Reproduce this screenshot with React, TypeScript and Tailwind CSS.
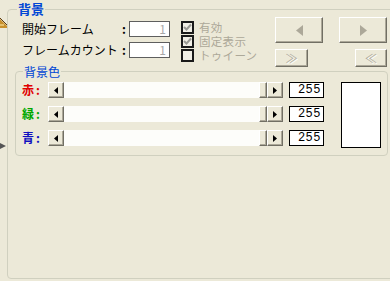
import React from "react";

const raised =
  "border border-t-white border-l-white border-r-[#716f64] border-b-[#716f64] bg-[#ece9d8] shadow-[inset_-1px_-1px_0_#aca899]";

function Arrow({ dir, color, w, h }: { dir: "left" | "right"; color: string; w: number; h: number }) {
  const pts = dir === "left" ? `${w},0 ${w},${h} 0,${h / 2}` : `0,0 0,${h} ${w},${h / 2}`;
  return (
    <svg width={w} height={h} viewBox={`0 0 ${w} ${h}`}>
      <polygon points={pts} fill={color} />
    </svg>
  );
}

function Checkbox({ checked, label }: { checked: boolean; label: string }) {
  return (
    <div className="flex h-[14px] items-center">
      <div className="flex h-[13px] w-[13px] items-center justify-center border-2 border-[#1a1a1a] bg-[#f1efe6]">
        {checked && (
          <svg width="9" height="9" viewBox="0 0 9 9">
            <path d="M1 4 L3.5 6.5 L8 1.5" stroke="#9a9a94" strokeWidth="2" fill="none" />
          </svg>
        )}
      </div>
      <span className="ml-[5px] text-[11.5px] leading-[14px] tracking-[0.3px] text-[#aca899]">{label}</span>
    </div>
  );
}

function FieldRow({ label }: { label: string }) {
  return (
    <div className="flex h-[16px] items-center">
      <span className="w-[100px] whitespace-nowrap text-[12px] leading-[16px] text-black">{label}</span>
      <span className="w-[7px] text-[12px] font-bold leading-[16px] text-black">:</span>
      <div className="flex h-[16px] w-[41px] items-center justify-end border border-[#5e5e5e] bg-white pr-[3px] text-[12px] leading-[14px] text-[#a8a8a8]">
        1
      </div>
    </div>
  );
}

function ColorRow({ label, color }: { label: string; color: string }) {
  return (
    <div className="flex h-[16px] items-center">
      <span className={`flex w-[26px] whitespace-nowrap text-[12px] font-bold leading-[16px] ${color}`}>
        {label}
        <span className="ml-[2px]">:</span>
      </span>
      <div className="flex h-[16px] w-[235px]">
        <div className={`flex h-[16px] w-[16px] items-center justify-center ${raised}`}>
          <Arrow dir="left" color="#000" w={4} h={7} />
        </div>
        <div className="h-[16px] flex-1 bg-[#fdfdfa]" />
        <div className={`h-[16px] w-[8px] ${raised}`} />
        <div className={`flex h-[16px] w-[16px] items-center justify-center ${raised}`}>
          <Arrow dir="right" color="#000" w={4} h={7} />
        </div>
      </div>
      <div className="ml-[6px] flex h-[16px] w-[35px] items-center justify-end border border-black bg-white pr-[2px] font-['Liberation_Mono',monospace] text-[12px] leading-[14px] tracking-[0.5px] text-black">
        255
      </div>
    </div>
  );
}

export default function App() {
  return (
    <div className="flex h-[281px] w-[390px] overflow-hidden bg-[#ece9d8] font-['Noto_Sans_CJK_JP','Noto_Sans',sans-serif]">
      {/* edge of the neighbouring panel */}
      <div className="flex w-[7px] shrink-0 flex-col">
        <svg className="mt-[17px]" width="7" height="11" viewBox="0 0 7 11">
          <path d="M0 2 L4 6 L7 9 L7 11 L0 11 Z" fill="#c8902c" />
          <path d="M0 1 L5 6 L7 8" stroke="#5a3a10" strokeWidth="1" fill="none" />
          <path d="M0 8 L4 8" stroke="#fff0b0" strokeWidth="1" />
        </svg>
        <svg className="mt-[115px]" width="6" height="6" viewBox="0 0 6 6">
          <polygon points="0,0 6,3 0,6" fill="#555" />
        </svg>
      </div>

      <fieldset className="mt-[2px] h-[277px] w-[400px] shrink-0 rounded-[4px] border border-[#d0d0bf]">
        <legend className="ml-[9px] px-[1px] text-[13px] font-bold leading-[14px] text-[#0046d5]">背景</legend>

        <div className="flex h-[49px]">
          <div className="ml-[14px] flex flex-col gap-[5px] pt-[5px]">
            <FieldRow label="開始フレーム" />
            <FieldRow label="フレームカウント" />
          </div>

          <div className="ml-[11px] flex w-[94px] flex-col pt-[4px]">
            <Checkbox checked label="有効" />
            <Checkbox checked label="固定表示" />
            <Checkbox checked={false} label="トゥイーン" />
          </div>

          <div className="flex w-[112px] flex-col gap-[6px] pt-[1px]">
            <div className="flex justify-between">
              <div className={`flex h-[26px] w-[48px] items-center justify-center ${raised}`}>
                <Arrow dir="left" color="#aca899" w={7} h={11} />
              </div>
              <div className={`flex h-[26px] w-[48px] items-center justify-center ${raised}`}>
                <Arrow dir="right" color="#aca899" w={7} h={11} />
              </div>
            </div>
            <div className="flex justify-between">
              <div className={`flex h-[18px] w-[33px] items-center justify-center text-[12px] leading-[14px] text-[#aca899] [text-shadow:1px_1px_0_#fff] ${raised}`}>
                ≫
              </div>
              <div className={`flex h-[18px] w-[32px] items-center justify-center text-[12px] leading-[14px] text-[#aca899] [text-shadow:1px_1px_0_#fff] ${raised}`}>
                ≪
              </div>
            </div>
          </div>
        </div>

        <fieldset className="ml-[7px] w-[373px] rounded-[4px] border border-[#d0d0bf] pb-[7px]">
          <legend className="ml-[7px] px-[1px] text-[12px] leading-[13px] text-[#0046d5]">背景色</legend>
          <div className="flex pt-[4px]">
            <div className="ml-[6px] flex flex-col gap-[8px]">
              <ColorRow label="赤" color="text-[#e00000]" />
              <ColorRow label="緑" color="text-[#00a800]" />
              <ColorRow label="青" color="text-[#1010c0]" />
            </div>
            <div className="ml-[17px] h-[66px] w-[40px] border border-black bg-white" />
          </div>
        </fieldset>
      </fieldset>
    </div>
  );
}
